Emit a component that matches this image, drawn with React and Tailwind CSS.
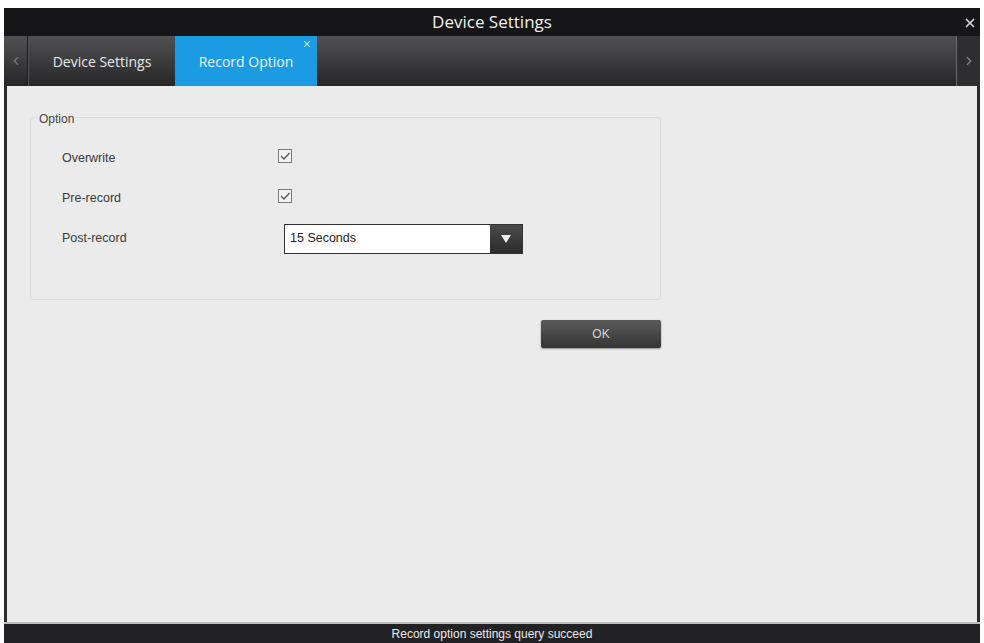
import { X, ChevronLeft, ChevronRight } from 'lucide-react';

function CheckBox() {
  return (
    <div className="flex h-[14px] w-[14px] items-center justify-center border border-[#7a7a7a] bg-[#f4f4f4]">
      <svg width="12" height="12" viewBox="0 0 12 12" fill="none">
        <path d="M2 6 L5 9 L10.5 3" stroke="#555" strokeWidth="1.3" />
      </svg>
    </div>
  );
}

function Row({ label, children }) {
  return (
    <div className="flex h-[40px] items-center">
      <span className="w-[216px] text-[12.5px] text-[#3a3a3a]">{label}</span>
      {children}
    </div>
  );
}

export default function App() {
  return (
    <div className="h-[643px] w-[984px] overflow-hidden bg-white pt-[8px] font-['Liberation_Sans',Arial,sans-serif]">
      <div className="mx-[4px] flex h-[635px] flex-col">
        {/* title */}
        <div className="relative flex h-[28px] items-center justify-center bg-[#161619]">
          <span className="text-[17px] text-[#f0f0f0] font-['Open_Sans',sans-serif]">Device Settings</span>
          <X size={14} strokeWidth={3} className="absolute right-[3px] top-[8px] text-[#cfcfcf]" />
        </div>

        {/* tabs */}
        <div className="flex h-[50px] bg-gradient-to-b from-[#505052] via-[#3c3c3e] to-[#262628] font-['Open_Sans',sans-serif]">
          <div className="flex w-[24px] items-center justify-center border-r border-[#1a1a1a]">
            <ChevronLeft size={14} className="text-[#777]" />
          </div>
          <div className="flex w-[147px] items-center justify-center border-l border-[#555] text-[14px] text-[#e8e8e8]">
            Device Settings
          </div>
          <div className="relative flex w-[142px] items-center justify-center bg-[#1b9ce2] text-[14px] text-[#e8f4fc]">
            Record Option
            <X size={10} strokeWidth={2.5} className="absolute right-[5px] top-[3px] text-[#d8eefb]" />
          </div>
          <div className="flex-1" />
          <div className="flex w-[24px] items-center justify-center border-l border-[#6a6a6a] bg-[#2e2e30]">
            <ChevronRight size={14} className="text-[#888]" />
          </div>
        </div>

        {/* content */}
        <div className="flex-1 border-x-[3px] border-[#2a2a2a] bg-[#ebebeb] pl-[23px] pt-[31px]">
          <div className="relative h-[183px] w-[631px] rounded-[3px] border border-[#dddddd] pl-[31px] pt-[20px]">
            <span className="absolute left-[6px] top-[-8px] bg-[#ebebeb] px-[2px] text-[12px] text-[#444]">Option</span>
            <Row label="Overwrite">
              <div className="-mt-[4px]"><CheckBox /></div>
            </Row>
            <Row label="Pre-record">
              <div className="-mt-[4px]"><CheckBox /></div>
            </Row>
            <Row label="Post-record">
              <div className="ml-[6px] mt-[2px] flex h-[30px] w-[239px] border border-[#333] bg-white">
                <span className="flex-1 pl-[5px] pt-[4px] text-[12.5px] text-[#222]">15 Seconds</span>
                <div className="flex w-[32px] items-center justify-center bg-gradient-to-b from-[#4a4a4a] to-[#2c2c2c]">
                  <svg width="10" height="8" viewBox="0 0 10 8">
                    <path d="M0 0 H10 L5 8 Z" fill="#eee" />
                  </svg>
                </div>
              </div>
            </Row>
          </div>
          <div className="flex w-[631px] justify-end pt-[20px]">
            <button className="h-[28px] w-[120px] rounded-[2px] bg-gradient-to-b from-[#5a5a5a] to-[#353535] text-[12px] text-[#d8d8d8] shadow-[0_1px_2px_rgba(0,0,0,0.4)]">
              OK
            </button>
          </div>
        </div>

        {/* status */}
        <div className="flex h-[21px] items-center justify-center border-t-[2px] border-[#bdbdbd] bg-[#222225] text-[12px] text-[#eaeaea]">
          Record option settings query succeed
        </div>
      </div>
    </div>
  );
}
